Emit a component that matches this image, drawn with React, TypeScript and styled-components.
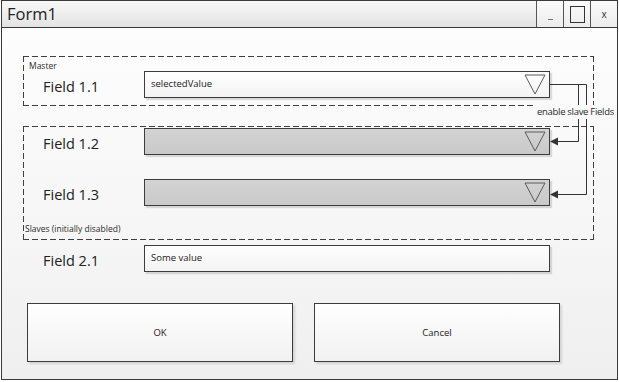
import React from 'react';
import styled, {createGlobalStyle, css} from 'styled-components';

const GlobalStyle = createGlobalStyle`
    body {
        margin: 0;
        background: #ffffff;
        font-family: 'Open Sans', 'Noto Sans', sans-serif;
        color: #2b2b2b;
    }
`;

const dashed = (color: string) => css`
    background-image:
        linear-gradient(to right, ${color} 62%, transparent 0%),
        linear-gradient(to right, ${color} 62%, transparent 0%),
        linear-gradient(to bottom, ${color} 62%, transparent 0%),
        linear-gradient(to bottom, ${color} 62%, transparent 0%);
    background-position: left top, left bottom, left top, right top;
    background-size: 9px 1px, 9px 1px, 1px 9px, 1px 9px;
    background-repeat: repeat-x, repeat-x, repeat-y, repeat-y;
`;

const Page = styled.div`
    position: relative;
    width: 619px;
    height: 382px;
`;

const Window = styled.div`
    box-sizing: border-box;
    display: flex;
    flex-direction: column;
    margin-left: 1px;
    width: 617px;
    height: 380px;
    border: 1px solid #3a3a3a;
    background: linear-gradient(to bottom, #fefefe 0%, #f6f6f6 60%, #efefef 100%);
`;

const TitleBar = styled.div`
    display: flex;
    height: 27px;
    box-sizing: border-box;
    border-bottom: 1px solid #3a3a3a;
    background: linear-gradient(to bottom, #f8f8f8, #e3e3e3);
`;

const Title = styled.div`
    flex: 1;
    padding-left: 5px;
    font-size: 16.5px;
    line-height: 25px;
    color: #222;
`;

const TitleButton = styled.div`
    width: 26px;
    border-left: 1px solid #555;
    background: linear-gradient(to bottom, #fbfbfb, #ececec);
    display: flex;
    align-items: center;
    justify-content: center;
    font-size: 10px;
    color: #333;
`;

const MinGlyph = styled.span`
    width: 5px;
    height: 1px;
    margin-top: 10px;
    background: #777;
`;

const MaxGlyph = styled.span`
    width: 15px;
    height: 17px;
    box-sizing: border-box;
    border: 1px solid #333;
`;

const Body = styled.div`
    flex: 1;
    padding: 28px 0 0 21px;
`;

const Group = styled.div<{$top: number; $padTop: number; $padBottom: number}>`
    width: 571px;
    box-sizing: border-box;
    margin-top: ${(p) => p.$top}px;
    padding: ${(p) => p.$padTop}px 0 ${(p) => p.$padBottom}px;
    ${dashed('#3f3f3f')}
`;

const GroupLabel = styled.div<{$left: number; $top?: number}>`
    font-size: 8.5px;
    line-height: 10px;
    height: 10px;
    padding-left: ${(p) => p.$left}px;
    margin-top: ${(p) => p.$top || 0}px;
    color: #2b2b2b;
`;

const Row = styled.div<{$top?: number}>`
    display: flex;
    align-items: center;
    height: 27px;
    padding-left: 20px;
    margin-top: ${(p) => p.$top || 0}px;
`;

const FieldLabel = styled.div`
    width: 101px;
    padding-top: 4px;
    font-size: 14.5px;
    color: #222;
`;

const Combo = styled.div<{$disabled?: boolean}>`
    box-sizing: border-box;
    display: flex;
    align-items: center;
    width: 406px;
    height: 27px;
    padding: 0 3px 0 6px;
    border: 1px solid #3c3c3c;
    font-size: 9.5px;
    color: #222;
    box-shadow: 2px 2px 1px rgba(0, 0, 0, 0.13);
    background: ${(p) => (p.$disabled
        ? 'linear-gradient(to bottom, #d3d3d3, #c9c9c9)'
        : 'linear-gradient(to bottom, #ffffff, #f3f3f3)')};
`;

const ComboText = styled.span`
    flex: 1;
    padding-bottom: 3px;
`;

const Arrow = styled.svg`
    flex: none;
`;

const Buttons = styled.div`
    display: flex;
    gap: 21px;
    margin-top: 31px;
    padding-left: 4px;
`;

const Button = styled.div<{$width: number}>`
    box-sizing: border-box;
    width: ${(p) => p.$width}px;
    height: 59px;
    display: flex;
    align-items: center;
    justify-content: center;
    border: 1px solid #3c3c3c;
    background: linear-gradient(to bottom, #ffffff, #f1f1f1);
    box-shadow: 2px 2px 2px rgba(0, 0, 0, 0.12);
    font-size: 9.5px;
    color: #222;
`;

const Connector = styled.svg`
    position: absolute;
    left: 0;
    top: 0;
    pointer-events: none;
`;

const Note = styled.div`
    position: absolute;
    left: 536px;
    top: 105px;
    padding: 0 1px;
    white-space: nowrap;
    background: #f9f9f9;
    font-size: 9.5px;
    letter-spacing: -0.3px;
    line-height: 14px;
    color: #2b2b2b;
`;

const DropArrow = () => (
    <Arrow width='22' height='21' viewBox='0 0 22 21'>
        <polygon
            points='1,1 21,1 11,20'
            fill='none'
            stroke='#5a5a5a'
            strokeWidth='1'
        />
    </Arrow>
);

const Field = ({label, value, disabled, top}: {label: string; value?: string; disabled?: boolean; top?: number}) => (
    <Row $top={top}>
        <FieldLabel>{label}</FieldLabel>
        <Combo $disabled={disabled}>
            <ComboText>{value}</ComboText>
            {value !== 'Some value' && <DropArrow/>}
        </Combo>
    </Row>
);

const App = () => (
    <Page>
        <GlobalStyle/>
        <Window>
            <TitleBar>
                <Title>{'Form1'}</Title>
                <TitleButton><MinGlyph/></TitleButton>
                <TitleButton><MaxGlyph/></TitleButton>
                <TitleButton>{'x'}</TitleButton>
            </TitleBar>
            <Body>
                <Group
                    $top={0}
                    $padTop={5}
                    $padBottom={8}
                >
                    <GroupLabel $left={6}>{'Master'}</GroupLabel>
                    <Field
                        label='Field 1.1'
                        value='selectedValue'
                    />
                </Group>
                <Group
                    $top={20}
                    $padTop={2}
                    $padBottom={6}
                >
                    <Field
                        label='Field 1.2'
                        disabled={true}
                    />
                    <Field
                        label='Field 1.3'
                        disabled={true}
                        top={24}
                    />
                    <GroupLabel
                        $left={2}
                        $top={18}
                    >
                        {'Slaves (initially disabled)'}
                    </GroupLabel>
                </Group>
                <Field
                    label='Field 2.1'
                    value='Some value'
                    top={5}
                />
                <Buttons>
                    <Button $width={266}>{'OK'}</Button>
                    <Button $width={246}>{'Cancel'}</Button>
                </Buttons>
            </Body>
        </Window>
        <Connector width='619' height='382' viewBox='0 0 619 382'>
            <g stroke='#333' strokeWidth='1' fill='none'>
                <path d='M549.5 84.5 H586.5 V194.5 H556'/>
                <path d='M578.5 84.5 V141.5 H556'/>
            </g>
            <g fill='#333'>
                <polygon points='550,141.5 558,137.5 558,145.5'/>
                <polygon points='550,194.5 558,190.5 558,198.5'/>
            </g>
        </Connector>
        <Note>{'enable slave Fields'}</Note>
    </Page>
);

export default App;
